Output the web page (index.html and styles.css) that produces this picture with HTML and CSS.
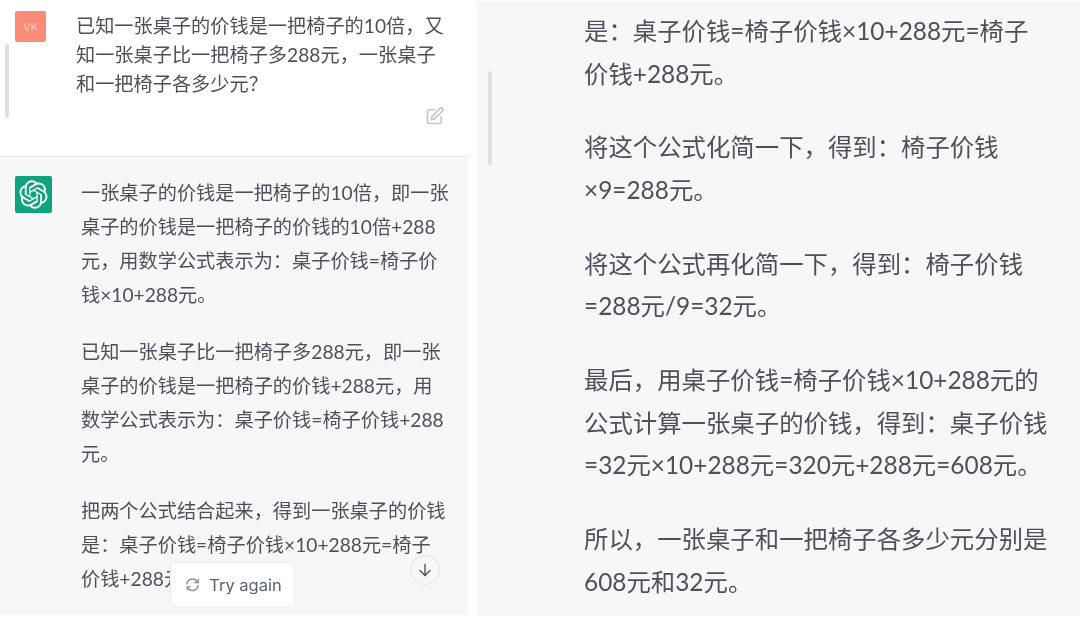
FILE: index.html
```html
<!DOCTYPE html>
<html lang="zh-CN">
<head>
<meta charset="utf-8">
<title>Chat</title>
<link rel="stylesheet" href="styles.css">
</head>
<body>
<main class="shot">
  <section class="panel left">
    <div class="scrollbar bar-left"></div>
    <article class="turn user">
      <div class="avatar vk">VK</div>
      <div class="user-body">
        <p class="question">已知一张桌子的价钱是一把椅子的10倍，又<br>知一张桌子比一把椅子多288元，一张桌子<br>和一把椅子各多少元？</p>
        <svg class="edit" viewBox="0 0 24 24" fill="none" stroke="currentColor" stroke-width="2" stroke-linecap="round" stroke-linejoin="round"><path d="M11 4.500H5a2 2 0 0 0-2 2V19a2 2 0 0 0 2 2h12.500a2 2 0 0 0 2-2v-6"/><path d="M18 3a2.100 2.100 0 0 1 3 3l-9.500 9.500-4 1 1-4L18 3z"/></svg>
      </div>
    </article>
    <article class="turn bot">
      <div class="avatar gpt">
        <svg viewBox="0 0 41 41" fill="currentColor"><path d="M37.5324 16.8707C37.9808 15.5241 38.1363 14.0974 37.9886 12.6859C37.8409 11.2744 37.3934 9.91076 36.676 8.68622C35.6126 6.83404 33.9882 5.3676 32.0373 4.4985C30.0864 3.62941 27.9098 3.40259 25.8215 3.85078C24.8796 2.7893 23.7219 1.94125 22.4257 1.36341C21.1295 0.785575 19.7249 0.491269 18.3058 0.500197C16.1708 0.495044 14.0893 1.16803 12.3614 2.42214C10.6335 3.67624 9.34853 5.44666 8.6917 7.47815C7.30085 7.76286 5.98686 8.3414 4.8377 9.17505C3.68854 10.0087 2.73073 11.0782 2.02839 12.312C0.956464 14.1591 0.498905 16.2988 0.721698 18.4228C0.944492 20.5467 1.83612 22.5449 3.268 24.1293C2.81966 25.4759 2.66413 26.9026 2.81182 28.3141C2.95951 29.7256 3.40701 31.0892 4.12437 32.3138C5.18791 34.1659 6.8123 35.6322 8.76321 36.5013C10.7141 37.3704 12.8907 37.5973 14.9789 37.1492C15.9208 38.2107 17.0786 39.0587 18.3747 39.6366C19.6709 40.2144 21.0755 40.5087 22.4946 40.4998C24.6307 40.5054 26.7133 39.8321 28.4418 38.5772C30.1704 37.3223 31.4556 35.5506 32.1119 33.5179C33.5027 33.2332 34.8167 32.6547 35.9659 31.821C37.115 30.9874 38.0728 29.9178 38.7752 28.684C39.8458 26.8371 40.3023 24.6979 40.0789 22.5748C39.8556 20.4517 38.9639 18.4544 37.5324 16.8707ZM22.4978 37.8849C20.7443 37.8874 19.0459 37.2733 17.6994 36.1501C17.7601 36.117 17.8666 36.0586 17.936 36.0161L25.9004 31.4156C26.1003 31.3019 26.2663 31.137 26.3813 30.9378C26.4964 30.7386 26.5563 30.5124 26.5549 30.2825V19.0542L29.9213 20.998C29.9389 21.0068 29.9541 21.0198 29.9656 21.0359C29.977 21.052 29.9842 21.0707 29.9867 21.0902V30.3889C29.9842 32.375 29.1946 34.2791 27.7909 35.6841C26.3872 37.0892 24.4838 37.8806 22.4978 37.8849ZM6.39227 31.0064C5.51397 29.4888 5.19742 27.7107 5.49804 25.9832C5.55718 26.0187 5.66048 26.0818 5.73461 26.1244L13.699 30.7248C13.8975 30.8408 14.1233 30.902 14.3532 30.902C14.583 30.902 14.8088 30.8408 15.0073 30.7248L24.731 25.1103V28.9979C24.7321 29.0177 24.7283 29.0376 24.7199 29.0556C24.7115 29.0736 24.6988 29.0893 24.6829 29.1012L16.6317 33.7497C14.9096 34.7416 12.8643 35.0097 10.9447 34.4954C9.02506 33.9811 7.38785 32.7263 6.39227 31.0064ZM4.29707 13.6194C5.17156 12.0998 6.55279 10.9364 8.19885 10.3327C8.19885 10.4013 8.19491 10.5228 8.19491 10.6071V19.808C8.19351 20.0378 8.25334 20.2638 8.36823 20.4629C8.48312 20.6619 8.64893 20.8267 8.84863 20.9404L18.5723 26.5542L15.206 28.4979C15.1894 28.5089 15.1703 28.5155 15.1505 28.5173C15.1307 28.5191 15.1107 28.516 15.0924 28.5082L7.04046 23.8557C5.32135 22.8601 4.06716 21.2235 3.55289 19.3046C3.03862 17.3858 3.30624 15.3413 4.29707 13.6194ZM31.955 20.0556L22.2312 14.4411L25.5976 12.4981C25.6142 12.4872 25.6333 12.4805 25.6531 12.4787C25.6729 12.4769 25.6928 12.4801 25.7111 12.4879L33.7631 17.1364C34.9967 17.849 36.0017 18.8982 36.6606 20.1613C37.3194 21.4244 37.6047 22.849 37.4832 24.2684C37.3617 25.6878 36.8382 27.0432 35.9743 28.1759C35.1103 29.3086 33.9415 30.1717 32.6047 30.6641C32.6047 30.5947 32.6047 30.4733 32.6047 30.3889V21.188C32.6066 20.9586 32.5474 20.7328 32.4332 20.5338C32.319 20.3348 32.154 20.1698 31.955 20.0556ZM35.3055 15.0128C35.2464 14.9765 35.1431 14.9142 35.069 14.8717L27.1045 10.2712C26.906 10.1554 26.6803 10.0943 26.4504 10.0943C26.2206 10.0943 25.9948 10.1554 25.7963 10.2712L16.0726 15.8858V11.9982C16.0715 11.9783 16.0753 11.9585 16.0837 11.9405C16.0921 11.9225 16.1048 11.9068 16.1207 11.8949L24.1719 7.25025C25.4053 6.53903 26.8158 6.19376 28.2383 6.25482C29.6608 6.31589 31.0364 6.78077 32.2044 7.59508C33.3723 8.40939 34.2842 9.53945 34.8334 10.8531C35.3826 12.1667 35.5464 13.6095 35.3055 15.0128ZM14.2424 21.9419L10.8752 19.9981C10.8576 19.9893 10.8423 19.9763 10.8309 19.9602C10.8195 19.9441 10.8122 19.9254 10.8098 19.9058V10.6071C10.8107 9.18295 11.2173 7.78848 11.9819 6.58696C12.7466 5.38544 13.8377 4.42659 15.1275 3.82264C16.4173 3.21869 17.8524 2.99464 19.2649 3.1767C20.6775 3.35876 22.0089 3.93941 23.1034 4.85067C23.0427 4.88379 22.937 4.94215 22.8668 4.98473L14.9024 9.58517C14.7025 9.69878 14.5366 9.86356 14.4215 10.0626C14.3065 10.2616 14.2466 10.4877 14.2479 10.7175L14.2424 21.9419ZM16.071 17.9991L20.4018 15.4978L24.7325 17.9975V22.9985L20.4018 25.4983L16.071 22.9985V17.9991Z"/></svg>
      </div>
      <div class="answer">
        <p>一张桌子的价钱是一把椅子的10倍，即一张<br>桌子的价钱是一把椅子的价钱的10倍+288<br>元，用数学公式表示为：桌子价钱=椅子价<br>钱×10+288元。</p>
        <p>已知一张桌子比一把椅子多288元，即一张<br>桌子的价钱是一把椅子的价钱+288元，用<br>数学公式表示为：桌子价钱=椅子价钱+288<br>元。</p>
        <p>把两个公式结合起来，得到一张桌子的价钱<br>是：桌子价钱=椅子价钱×10+288元=椅子<br>价钱+288元。</p>
      </div>
    </article>
    <button class="retry" type="button">
      <svg class="retry-icon" viewBox="0 0 16 16" fill="none" stroke="currentColor" stroke-width="1.500" stroke-linecap="round" stroke-linejoin="round"><path d="M2 7.500a6 6 0 0 1 10.500-3.300L14 5.800"/><path d="M14 2.300v3.500h-3.500"/><path d="M14 9a6 6 0 0 1-10.500 3.300"/><path d="M2.500 13.500V10.500"/><path d="M2.500 10.500h3"/></svg>
      <span>Try again</span>
    </button>
    <div class="down">
      <svg viewBox="0 0 16 16" fill="none" stroke="currentColor" stroke-width="1.400" stroke-linecap="round" stroke-linejoin="round"><path d="M8 2.500v11"/><path d="M3 8.500l5 5 5-5"/></svg>
    </div>
  </section>
  <section class="panel right">
    <div class="scrollbar bar-right"></div>
    <div class="continued">
      <p>是：桌子价钱=椅子价钱×10+288元=椅子<br>价钱+288元。</p>
      <p>将这个公式化简一下，得到：椅子价钱<br>×9=288元。</p>
      <p>将这个公式再化简一下，得到：椅子价钱<br>=288元/9=32元。</p>
      <p>最后，用桌子价钱=椅子价钱×10+288元的<br>公式计算一张桌子的价钱，得到：桌子价钱<br>=32元×10+288元=320元+288元=608元。</p>
      <p>所以，一张桌子和一把椅子各多少元分别是<br>608元和32元。</p>
    </div>
  </section>
</main>
</body>
</html>
```
FILE: styles.css
```css
* { box-sizing: border-box; }
html, body { margin: 0; padding: 0; background: #fff; }
body { font-family: "Liberation Sans", "Noto Sans CJK SC", sans-serif; }
.shot { width: 1080px; height: 617px; display: flex; gap: 9px; overflow: hidden; background: #fff; color: #4d5059; font-family: Lato, "Noto Sans CJK SC", sans-serif; filter: blur(0.45px); }
p { margin: 0; white-space: nowrap; }
.panel { position: relative; height: 615px; overflow: hidden; }
.left { width: 468px; display: flex; flex-direction: column; background: #f7f7f8; }
.right { flex: 1; margin-top: 1px; background: #f7f7f8; }
.scrollbar { position: absolute; width: 4px; border-radius: 2px; background: #dedee0; }
.bar-left { left: 5px; top: 44px; height: 74px; }
.bar-right { left: 11px; top: 70px; height: 94px; }
.turn { display: flex; }
.user { height: 157px; padding: 11px 0 0 15px; background: #fff; border-bottom: 1px solid #e8e8ea; }
.bot { flex: 1; padding: 19px 0 0 15px; }
.avatar { flex: none; display: flex; align-items: center; justify-content: center; border-radius: 2px; color: #fff; }
.vk { width: 31px; height: 31px; background: #fb8b76; color: #fcd0c6; font: 11px Inter, sans-serif; }
.gpt { width: 37px; height: 37px; background: #10a37f; }
.gpt svg { width: 29px; height: 29px; }
.user-body { margin-left: 30px; width: 369px; display: flex; flex-direction: column; }
.question { font-size: 19.200px; line-height: 29px; }
.edit { align-self: flex-end; width: 20px; height: 20px; margin-top: 8px; color: #c5c5d2; }
.answer { margin-left: 29px; font-size: 19.200px; line-height: 34px; display: flex; flex-direction: column; gap: 23px; }
.continued { padding: 9px 0 0 107px; font-size: 24.400px; line-height: 42.500px; display: flex; flex-direction: column; gap: 31.400px; }
.retry { position: absolute; left: 170px; top: 562px; width: 125px; height: 45px; display: flex; align-items: center; justify-content: center; gap: 9px; padding: 0 0 0 2px; background: #fff; border: 1px solid #ececf1; border-radius: 4px; color: #5b6170; font: 16.500px Inter, sans-serif; }
.retry-icon { width: 15px; height: 15px; color: #8e8ea0; }
.down { position: absolute; left: 410px; top: 555px; width: 30px; height: 30px; display: flex; align-items: center; justify-content: center; border: 1px solid #e3e3e7; border-radius: 50%; color: #4b4f5c; background: #f7f7f8; }
.down svg { width: 16px; height: 16px; }
```
